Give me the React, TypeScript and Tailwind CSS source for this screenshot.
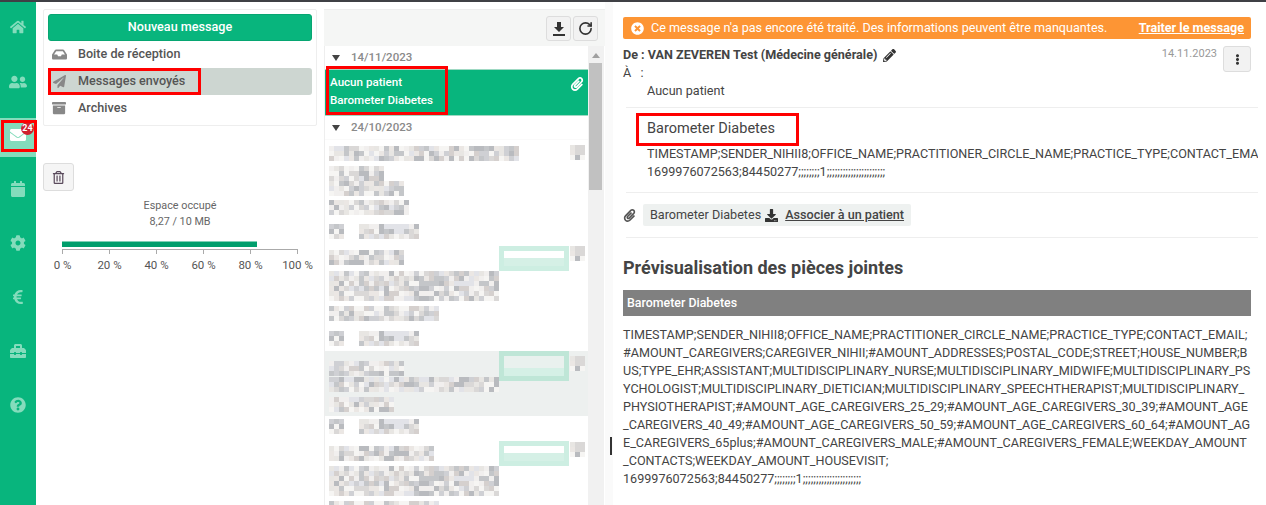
import { RotateCw } from "lucide-react";
import {
  FaArchive,
  FaCalendar,
  FaCog,
  FaDownload,
  FaEllipsisV,
  FaEnvelope,
  FaEuroSign,
  FaHome,
  FaInbox,
  FaPaperPlane,
  FaPaperclip,
  FaPencilAlt,
  FaQuestionCircle,
  FaRegTrashAlt,
  FaTimesCircle,
  FaToolbox,
  FaUserFriends,
} from "react-icons/fa";

const navIcons = [FaHome, FaUserFriends, FaEnvelope, FaCalendar, FaCog, FaEuroSign, FaToolbox, FaQuestionCircle];
const ticks = ["0 %", "20 %", "40 %", "60 %", "80 %", "100 %"];
const mosaicColors = ["#e8e6e3", "#dad8d7", "#cfd0d4", "#f1efee", "#c4c6c9", "#e2e3e8", "#f6f5f3", "#d5d0ce", "#ebe7e4", "#b9bbbf"];
const previewText =
  "TIMESTAMP;SENDER_NIHII8;OFFICE_NAME;PRACTITIONER_CIRCLE_NAME;PRACTICE_TYPE;CONTACT_EMAIL;#AMOUNT_CAREGIVERS;CAREGIVER_NIHII;#AMOUNT_ADDRESSES;POSTAL_CODE;STREET;HOUSE_NUMBER;BUS;TYPE_EHR;ASSISTANT;MULTIDISCIPLINARY_NURSE;MULTIDISCIPLINARY_MIDWIFE;MULTIDISCIPLINARY_PSYCHOLOGIST;MULTIDISCIPLINARY_DIETICIAN;MULTIDISCIPLINARY_SPEECHTHERAPIST;MULTIDISCIPLINARY_PHYSIOTHERAPIST;#AMOUNT_AGE_CAREGIVERS_25_29;#AMOUNT_AGE_CAREGIVERS_30_39;#AMOUNT_AGE_CAREGIVERS_40_49;#AMOUNT_AGE_CAREGIVERS_50_59;#AMOUNT_AGE_CAREGIVERS_60_64;#AMOUNT_AGE_CAREGIVERS_65plus;#AMOUNT_CAREGIVERS_MALE;#AMOUNT_CAREGIVERS_FEMALE;WEEKDAY_AMOUNT_CONTACTS;WEEKDAY_AMOUNT_HOUSEVISIT;";
const dataLine = "1699976072563;84450277;;;;;;;;1;;;;;;;;;;;;;;;;;;;;;;";

function pick(i: number, seed: number) {
  const n = Math.sin(i * 12.9898 + seed * 78.233) * 43758.5453;
  return Math.floor((n - Math.floor(n)) * mosaicColors.length);
}

// pixelated stand-in for the blurred out patient data
function Mosaic({ width, seed = 1 }: { width: number; seed?: number }) {
  const cells = Math.round(width / 5) * 3;
  return (
    <div className="grid h-[15px] grid-cols-[repeat(auto-fill,5px)] grid-rows-3" style={{ width }}>
      {Array.from({ length: cells }, (_, i) => (
        <div key={i} style={{ backgroundColor: mosaicColors[pick(i, seed)] }} />
      ))}
    </div>
  );
}

function Badge({ top, active }: { top: number; active?: boolean }) {
  return (
    <div
      className={`absolute left-[174px] flex w-[70px] flex-col border-[5px] ${active ? "h-[30px] border-[#bfe6d7] bg-[#e9f1ee]" : "h-[25px] border-[#cdeee2] bg-white"}`}
      style={{ top }}
    >
      <div className="mt-auto h-[8px] bg-[#d5f0e6]" />
    </div>
  );
}

function Attach({ top }: { top: number }) {
  return (
    <div className="absolute left-[245px] w-[15px]" style={{ top }}>
      <Mosaic width={15} seed={5} />
    </div>
  );
}

function DateRow({ label }: { label: string }) {
  return (
    <div className="flex h-[23px] items-center pl-[7px] text-[11.5px] font-medium text-[#8a8a8a]">
      <svg viewBox="0 0 8 6" className="mr-[11px] h-[6px] w-[8px] fill-[#444]">
        <path d="M0 0h8L4 6z" />
      </svg>
      {label}
    </div>
  );
}

function BlurredDate({ height }: { height: number }) {
  return (
    <div className="flex items-center gap-[15px] bg-white pl-[4px]" style={{ height }}>
      <Mosaic width={15} seed={3} />
      <Mosaic width={60} seed={2} />
    </div>
  );
}

type Line = [number, number];

function BlurredItem({
  lines,
  height,
  pad,
  badgeTop,
  attachTop,
  active,
}: {
  lines: Line[];
  height: number;
  pad: number;
  badgeTop?: number;
  attachTop: number;
  active?: boolean;
}) {
  return (
    <div className={`relative flex flex-col px-[4px] ${active ? "bg-[#edf0ef]" : "bg-white"}`} style={{ height, paddingTop: pad }}>
      {lines.map(([w, gap], i) => (
        <div key={i} style={{ marginTop: gap }}>
          <Mosaic width={w} seed={i + 7 + height} />
        </div>
      ))}
      {badgeTop !== undefined && <Badge top={badgeTop} active={active} />}
      <Attach top={attachTop} />
    </div>
  );
}

function Sidebar() {
  return (
    <nav className="w-[36px] shrink-0 bg-[#08b57d]">
      {navIcons.map((Icon, i) => (
        <div key={i} className="h-[54px] pt-[8px]">
          <div className={`relative flex h-[39px] justify-center pt-[9px] ${i === 2 ? "bg-[#84dcbc] text-white" : "text-[#84dcbc]"}`}>
            <Icon size={i === 1 ? 18 : 16} />
            {i === 2 && (
              <>
                <span className="absolute left-[21px] top-[4px] flex h-[13px] w-[13px] items-center justify-center rounded-full bg-[#d0202e] text-[9px] font-bold leading-none text-white">
                  24
                </span>
                <div className="absolute left-[1px] top-[2px] h-[32px] w-[36px] border-[3px] border-[#f00]" />
              </>
            )}
          </div>
        </div>
      ))}
    </nav>
  );
}

function LeftPane() {
  const rowClass = "relative flex h-[27px] items-center rounded-[3px] px-[4px] pb-[1px] text-[12.6px] font-medium text-[#555]";
  return (
    <section className="w-[288px] shrink-0 pl-[7px] pt-[7px]">
      <div className="h-[117px] w-[274px] rounded-[2px] border border-[#eee] p-[4px]">
        <div className="flex h-[27px] items-center justify-center rounded-[3px] border border-[#07a672] bg-[#08b57d] text-[12.6px] font-medium text-white">
          Nouveau message
        </div>
        <div className={rowClass}>
          <FaInbox size={15} className="mr-[11px] text-[#888]" />
          Boite de réception
        </div>
        <div className={`${rowClass} bg-[#cdd6d1]`}>
          <FaPaperPlane size={13} className="ml-[1px] mr-[12px] text-[#888]" />
          Messages envoyés
          <div className="absolute left-0 top-0 h-[27px] w-[153px] border-[3px] border-[#f00]" />
        </div>
        <div className={rowClass}>
          <FaArchive size={14} className="mr-[12px] text-[#888]" />
          Archives
        </div>
      </div>

      <button className="mt-[37px] flex h-[28px] w-[31px] items-center justify-center rounded-[3px] border border-[#ddd] bg-[#f5f5f5] text-[#5a4a5c]">
        <FaRegTrashAlt size={13} />
      </button>

      <div className="mt-[7px] w-[274px] text-center text-[10.8px] text-[#666]">
        <div className="leading-[16px]">Espace occupé</div>
        <div className="leading-[16px]">8,27 / 10 MB</div>
      </div>

      {/* storage chart */}
      <div className="ml-[19px] mt-[11px] w-[236px]">
        <div className="h-[6px] w-[195px] border-t border-[#7fd0b5] bg-[#009e6c]" />
        <div className="mt-[2px] flex h-[4px] justify-between border-t border-[#aaa]">
          {ticks.map((t) => (
            <div key={t} className="h-[4px] w-px bg-[#aaa]" />
          ))}
        </div>
        <div className="-ml-[23px] mt-[5px] flex text-[11.5px] leading-[14px] text-[#555]">
          {ticks.map((t) => (
            <span key={t} className="w-[47px] shrink-0 whitespace-nowrap text-center">{t}</span>
          ))}
        </div>
      </div>
    </section>
  );
}

function MessageList() {
  return (
    <section className="w-[281px] shrink-0 pt-[7px]">
      <div className="flex h-[37px] items-start justify-end gap-[2px] border-t border-[#eee] bg-[#f5f6f5] pr-[7px] pt-[6px]">
        <button className="flex h-[25px] w-[25px] items-center justify-center rounded-[3px] border border-[#ddd] bg-[#f2f2f2]">
          <svg viewBox="0 0 14 14" className="h-[14px] w-[14px] fill-[#333]">
            <path d="M5 0h4v5h3L7 10 2 5h3zM1 12h12v2H1z" />
          </svg>
        </button>
        <button className="flex h-[25px] w-[25px] items-center justify-center rounded-[3px] border border-[#ddd] bg-[#f2f2f2]">
          <RotateCw size={15} strokeWidth={2.6} className="text-[#333]" />
        </button>
      </div>
      <div className="flex">
        <div className="h-[459px] w-[264px] overflow-hidden border-l border-[#eee] bg-white">
          <DateRow label="14/11/2023" />
          <div className="relative flex h-[47px] flex-col justify-center border-y border-[#9fd9c3] bg-[#08b57d] pb-[3px] pl-[5px] text-[11.6px] font-medium leading-[18px] text-white">
            <div>Aucun patient</div>
            <div>Barometer Diabetes</div>
            <FaPaperclip size={14} className="absolute right-[4px] top-[7px]" />
            <div className="absolute -top-[4px] left-[1px] h-[49px] w-[122px] border-[3px] border-[#f00]" />
          </div>
          <DateRow label="24/10/2023" />
          <div className="h-px bg-[#fafafa]" />
          <BlurredItem height={81} pad={6} attachTop={5} lines={[[190, 0], [55, 5], [75, 0], [80, 4]]} />
          <BlurredDate height={20} />
          <BlurredItem height={85} pad={9} badgeTop={5} attachTop={5} lines={[[75, 0], [170, 6], [170, 0], [110, 5]]} />
          <BlurredDate height={25} />
          <BlurredItem height={65} pad={10} badgeTop={0} attachTop={5} active lines={[[75, 0], [170, 1], [65, 5]]} />
          <BlurredDate height={21} />
          <BlurredItem height={85} pad={9} badgeTop={4} attachTop={5} lines={[[105, 0], [170, 5], [170, 0], [110, 5]]} />
        </div>
        <div className="relative h-[459px] w-[16px] bg-[#f1f1f1]">
          <svg viewBox="0 0 8 5" className="absolute left-[4px] top-[7px] h-[5px] w-[8px] fill-[#a0a0a0]">
            <path d="M4 0l4 5H0z" />
          </svg>
          <div className="absolute left-[1px] top-[17px] h-[127px] w-[13px] bg-[#c1c1c1]" />
        </div>
      </div>
    </section>
  );
}

function MessageDetail() {
  return (
    <section className="relative min-w-0 flex-1 overflow-hidden pl-[18px] pt-[15px]">
      <div className="absolute inset-y-0 left-0 w-[8px] bg-[#fafafa]" />
      <div className="absolute left-[5px] top-[435px] h-[18px] w-[2px] bg-[#333]" />

      <div className="flex h-[22px] w-[628px] items-center rounded-[2px] bg-[#fd9534] pl-[8px] pr-[7px] text-[12.6px] text-white">
        <FaTimesCircle size={13} className="mr-[7px]" />
        <span>Ce message n'a pas encore été traité. Des informations peuvent être manquantes.</span>
        <span className="ml-auto font-bold underline">Traiter le message</span>
      </div>

      <div className="relative w-[628px] text-[12.6px] text-[#444]">
        <div className="flex items-center pt-[7px] leading-[18px]">
          <span className="font-bold">De : VAN ZEVEREN Test (Médecine générale)</span>
          <FaPencilAlt size={13} className="ml-[6px] text-[#333]" />
        </div>
        <div className="leading-[18px]">À&nbsp;&nbsp;&nbsp;:</div>
        <div className="pl-[24px] leading-[18px]">Aucun patient</div>
        <span className="absolute right-[34px] top-[7px] text-[11px] text-[#999]">14.11.2023</span>
        <button className="absolute right-0 top-[7px] flex h-[26px] w-[28px] items-center justify-center rounded-[3px] border border-[#ddd] bg-[#f2f2f2]">
          <FaEllipsisV size={11} className="text-[#333]" />
        </button>
      </div>

      <div className="ml-[3px] mt-[7px] w-[632px] border-t border-[#eee]" />
      <div className="relative ml-[24px]">
        <div className="h-[84px] w-[611px] overflow-hidden text-[12.6px] text-[#444]">
          <div className="pt-[11px] text-[14.5px] leading-[20px]">Barometer Diabetes</div>
          <div className="mt-[6px] whitespace-nowrap leading-[18px]">
            TIMESTAMP;SENDER_NIHII8;OFFICE_NAME;PRACTITIONER_CIRCLE_NAME;PRACTICE_TYPE;CONTACT_EMAIL;
          </div>
          <div className="whitespace-nowrap leading-[18px]">{dataLine}</div>
        </div>
        <div className="absolute left-[-11px] top-[5px] h-[33px] w-[163px] border-[3px] border-[#f00]" />
      </div>
      <div className="ml-[3px] w-[632px] border-t border-[#eee]" />

      <div className="mt-[11px] flex items-center">
        <FaPaperclip size={13} className="mr-[7px] text-[#555]" />
        <div className="flex h-[22px] items-center rounded-[2px] bg-[#eef1f0] px-[7px] text-[12.6px] text-[#444]">
          Barometer Diabetes
          <FaDownload size={13} className="ml-[4px] mr-[7px] text-[#333]" />
          <span className="font-medium underline">Associer à un patient</span>
        </div>
      </div>
      <div className="ml-[3px] mt-[11px] w-[632px] border-t border-[#eee]" />

      <h2 className="mt-[19px] text-[18px] font-bold leading-[22px] text-[#444]">Prévisualisation des pièces jointes</h2>
      <div className="mt-[11px] flex h-[26px] w-[628px] items-center bg-[#808080] pl-[4px] text-[12.4px] font-medium text-white">
        Barometer Diabetes
      </div>
      <div className="mt-[10px] w-[628px] break-all text-[12.6px] leading-[18px] text-[#444]">
        <div>{previewText}</div>
        <div>{dataLine}</div>
      </div>
    </section>
  );
}

export default function App() {
  return (
    <div className="flex h-[505px] w-[1266px] flex-col overflow-hidden bg-white font-['Roboto',sans-serif]">
      <div className="h-[2px] shrink-0 bg-[#3f4045]" />
      <div className="flex min-h-0 flex-1">
        <Sidebar />
        <LeftPane />
        <MessageList />
        <MessageDetail />
      </div>
    </div>
  );
}
